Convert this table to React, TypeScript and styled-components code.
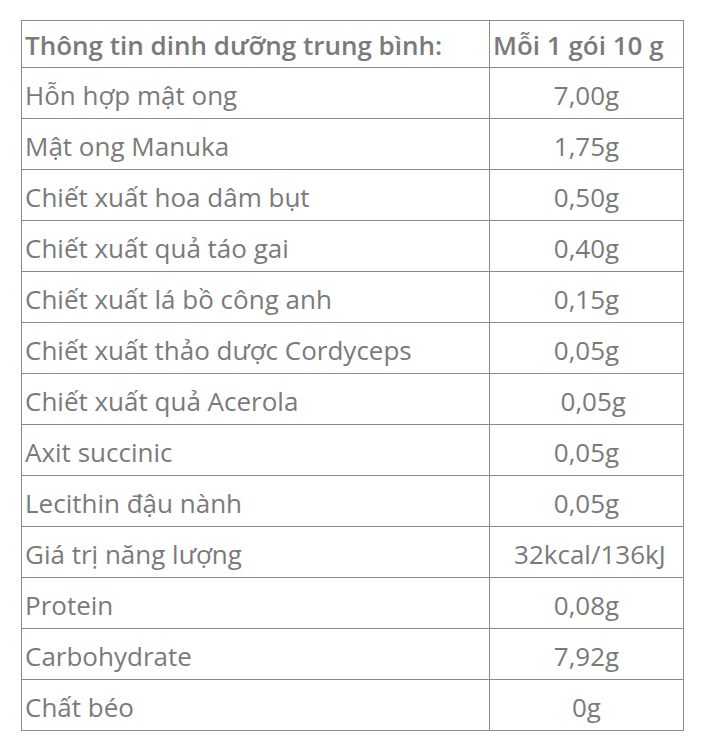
import { createGlobalStyle, styled } from "styled-components";

const GlobalStyle = createGlobalStyle`
  html, body {
    margin: 0;
    padding: 0;
    background: #fff;
  }
  body {
    font-family: "Open Sans", "Noto Sans", sans-serif;
  }
`;

const Page = styled.div`
  padding: 20px 0 0 21px;
`;

const Table = styled.table`
  border-collapse: collapse;
  table-layout: fixed;
  width: 663px;
  color: #7a7a7a;
  font-size: 26px;
`;

const Cell = styled.td`
  border: 1px solid #8a8a8a;
  padding: 6px 3px 0;
  height: 51px;
  box-sizing: border-box;
  line-height: 1.2;
  white-space: pre;
`;

const HeadCell = styled(Cell)<{ $width?: number }>`
  height: 47px;
  padding-top: 3px;
  font-weight: 600;
  text-align: left;
  width: ${(p) => (p.$width ? `${p.$width}px` : "auto")};
`;

const NameCell = styled(Cell)``;

const ValueCell = styled(Cell)`
  text-align: center;
`;

const rows: [string, string][] = [
  ["Hỗn hợp mật ong", "7,00g"],
  ["Mật ong Manuka", "1,75g"],
  ["Chiết xuất hoa dâm bụt", "0,50g"],
  ["Chiết xuất quả táo gai", "0,40g"],
  ["Chiết xuất lá bồ công anh", "0,15g"],
  ["Chiết xuất thảo dược Cordyceps", "0,05g"],
  ["Chiết xuất quả Acerola", "\u00a0\u00a00,05g"],
  ["Axit succinic", "0,05g"],
  ["Lecithin đậu nành", "0,05g"],
  ["Giá trị năng lượng", "\u00a032kcal/136kJ"],
  ["Protein", "0,08g"],
  ["Carbohydrate", "7,92g"],
  ["Chất béo", "0g"],
];

export default function App() {
  return (
    <>
      <GlobalStyle />
      <Page>
        <Table>
          <tbody>
            <tr>
              <HeadCell $width={468}>Thông tin dinh dưỡng trung bình:</HeadCell>
              <HeadCell>Mỗi 1 gói 10 g</HeadCell>
            </tr>
            {rows.map(([name, value]) => (
              <tr key={name}>
                <NameCell>{name}</NameCell>
                <ValueCell>{value}</ValueCell>
              </tr>
            ))}
          </tbody>
        </Table>
      </Page>
    </>
  );
}
